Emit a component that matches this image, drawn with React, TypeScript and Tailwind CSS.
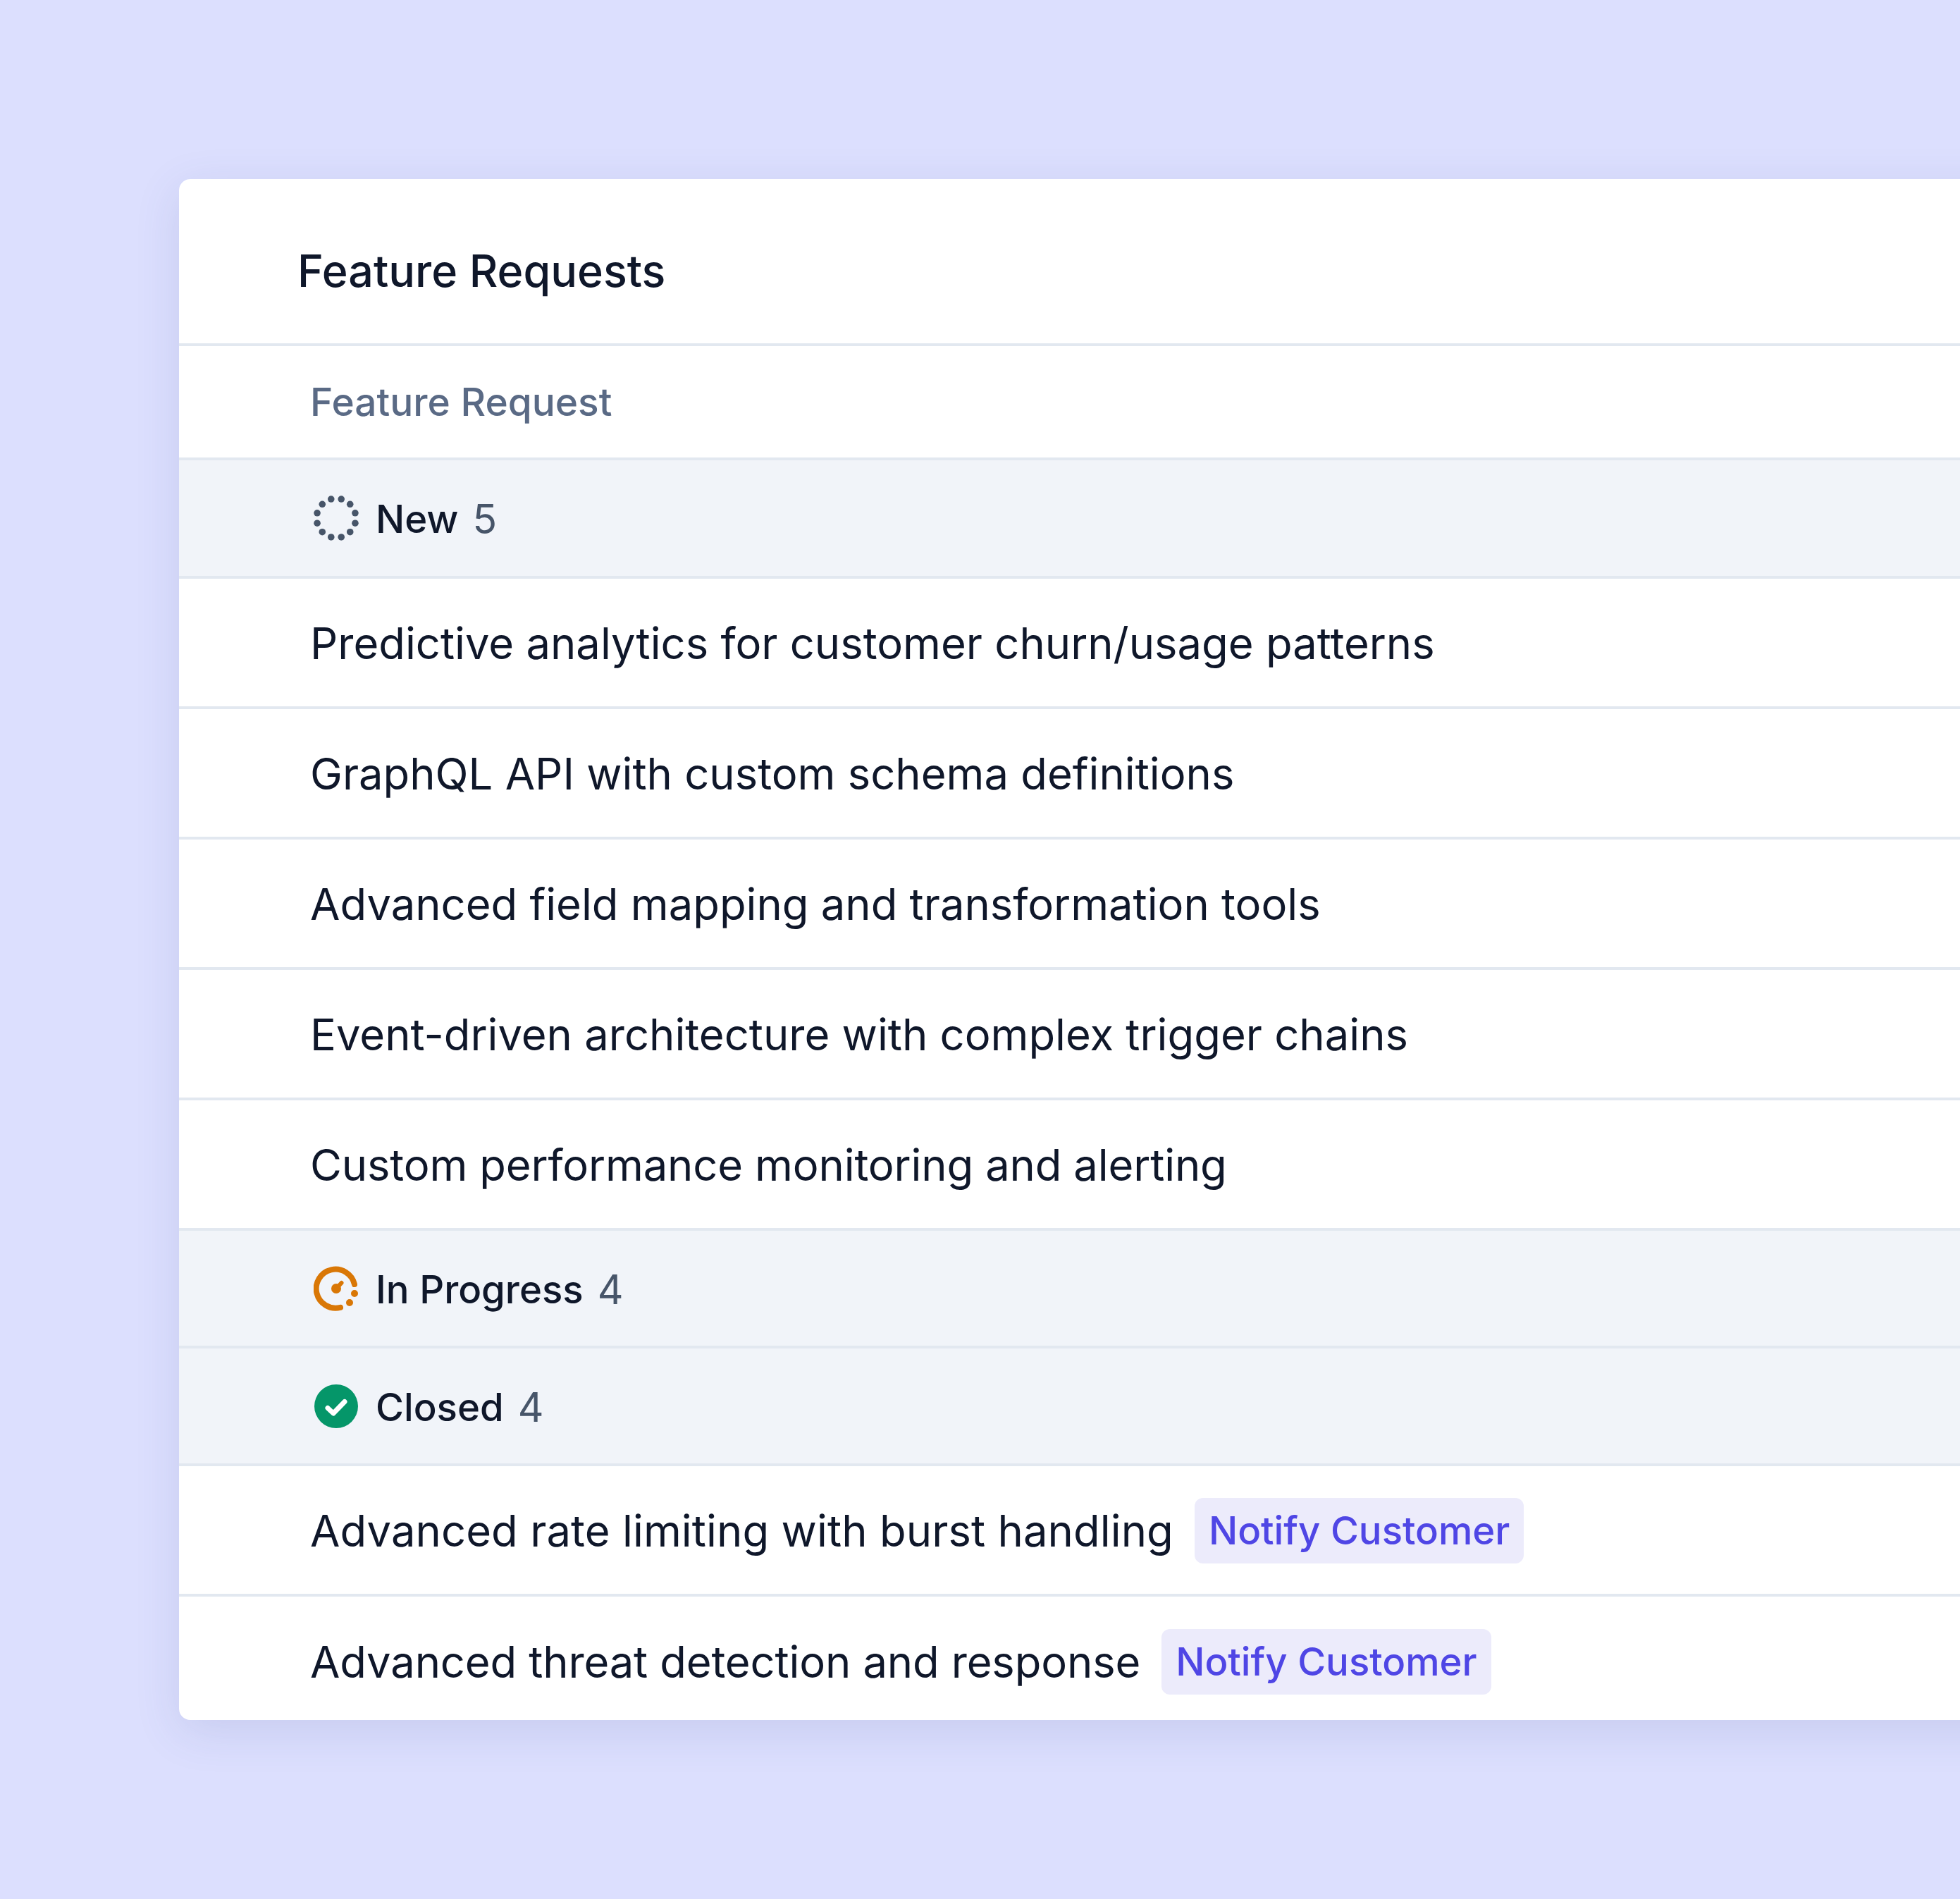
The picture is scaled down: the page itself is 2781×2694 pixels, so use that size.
import React from 'react';

const dots = Array.from({ length: 12 }, (_, i) => {
  const a = ((i + 0.5) * Math.PI) / 6;
  return { cx: 32 + 27.9 * Math.cos(a), cy: 32 + 27.9 * Math.sin(a) };
});

function NewIcon() {
  return (
    <svg viewBox="0 0 64 64" className="w-16 h-16 shrink-0">
      {dots.map((d, i) => (
        <circle key={i} cx={d.cx} cy={d.cy} r="4.8" fill="#475569" />
      ))}
    </svg>
  );
}

function ProgressIcon() {
  return (
    <svg viewBox="0 0 64 64" className="w-16 h-16 shrink-0">
      <path d="M58 26 A 27.5 27.5 0 1 0 38 58.8" fill="none" stroke="#d97706" strokeWidth="8" strokeLinecap="round" />
      <circle cx="58" cy="39" r="5" fill="#d97706" />
      <circle cx="51" cy="52" r="5" fill="#d97706" />
      <circle cx="32" cy="32" r="7" fill="#d97706" />
      <path d="M33 31 L39.5 24" stroke="#d97706" strokeWidth="6" strokeLinecap="round" />
    </svg>
  );
}

function ClosedIcon() {
  return (
    <svg viewBox="0 0 64 64" className="w-16 h-16 shrink-0">
      <circle cx="32" cy="32" r="31" fill="#059669" />
      <path d="M20 34.5 L28 42 L44 25.5" fill="none" stroke="#fff" strokeWidth="7" strokeLinecap="round" strokeLinejoin="round" />
    </svg>
  );
}

function GroupRow({ icon, label, count, tall }: { icon: React.ReactNode; label: string; count: number; tall?: boolean }) {
  return (
    <div className={`flex items-center pl-[191px] bg-[#f1f4f9] border-b-4 border-[#e2e8f0] ${tall ? 'h-[168px]' : 'h-[167px]'}`}>
      {icon}
      <span className="ml-6 pt-1 text-[54.5px] font-medium text-[#0f172a]">{label}</span>
      <span className="ml-5 pt-1 text-[57px] text-[#475569]">{count}</span>
    </div>
  );
}

function Row({ title, notify, last, textClass }: { title: string; notify?: boolean; last?: boolean; textClass?: string }) {
  return (
    <div className={`flex items-center pl-[186px] ${last ? 'h-[175px] pt-2' : 'h-[185px] border-b-4 border-[#e2e8f0]'}`}>
      <span className={`pt-1 text-[61.5px] text-[#0f172a] ${textClass ?? ''}`}>{title}</span>
      {notify && (
        <span className="ml-[30px] mt-0.5 flex items-center h-[93px] px-5 rounded-xl bg-[#ecebfb] text-[54.5px] font-medium text-[#4f46e5]">
          Notify Customer
        </span>
      )}
    </div>
  );
}

export default function App() {
  return (
    <div className="h-[2694px] overflow-hidden bg-[#dcdffe] pt-[254px] pl-[254px] font-['Inter',sans-serif]">
      <div className="w-[2800px] rounded-l-2xl bg-white shadow-[0_16px_64px_rgba(71,85,150,0.14)]">
        <div className="flex items-center h-[237px] pl-[168px] pt-[28px] border-b-4 border-[#e2e8f0] text-[62.8px] font-[550] text-[#0f172a]">
          Feature Requests
        </div>
        <div className="flex items-center h-[162px] pl-[186px] border-b-4 border-[#e2e8f0] text-[55px] font-medium text-[#5a6a85]">
          Feature Request
        </div>
        <GroupRow icon={<NewIcon />} label="New" count={5} tall />
        <Row title="Predictive analytics for customer churn/usage patterns" />
        <Row title="GraphQL API with custom schema definitions" />
        <Row title="Advanced field mapping and transformation tools" />
        <Row title="Event-driven architecture with complex trigger chains" />
        <Row title="Custom performance monitoring and alerting" textClass="tracking-[-0.15px]" />
        <GroupRow icon={<ProgressIcon />} label="In Progress" count={4} />
        <GroupRow icon={<ClosedIcon />} label="Closed" count={4} />
        <Row title="Advanced rate limiting with burst handling" notify textClass="tracking-[0.08px]" />
        <Row title="Advanced threat detection and response" notify last textClass="tracking-[-0.14px]" />
      </div>
    </div>
  );
}
